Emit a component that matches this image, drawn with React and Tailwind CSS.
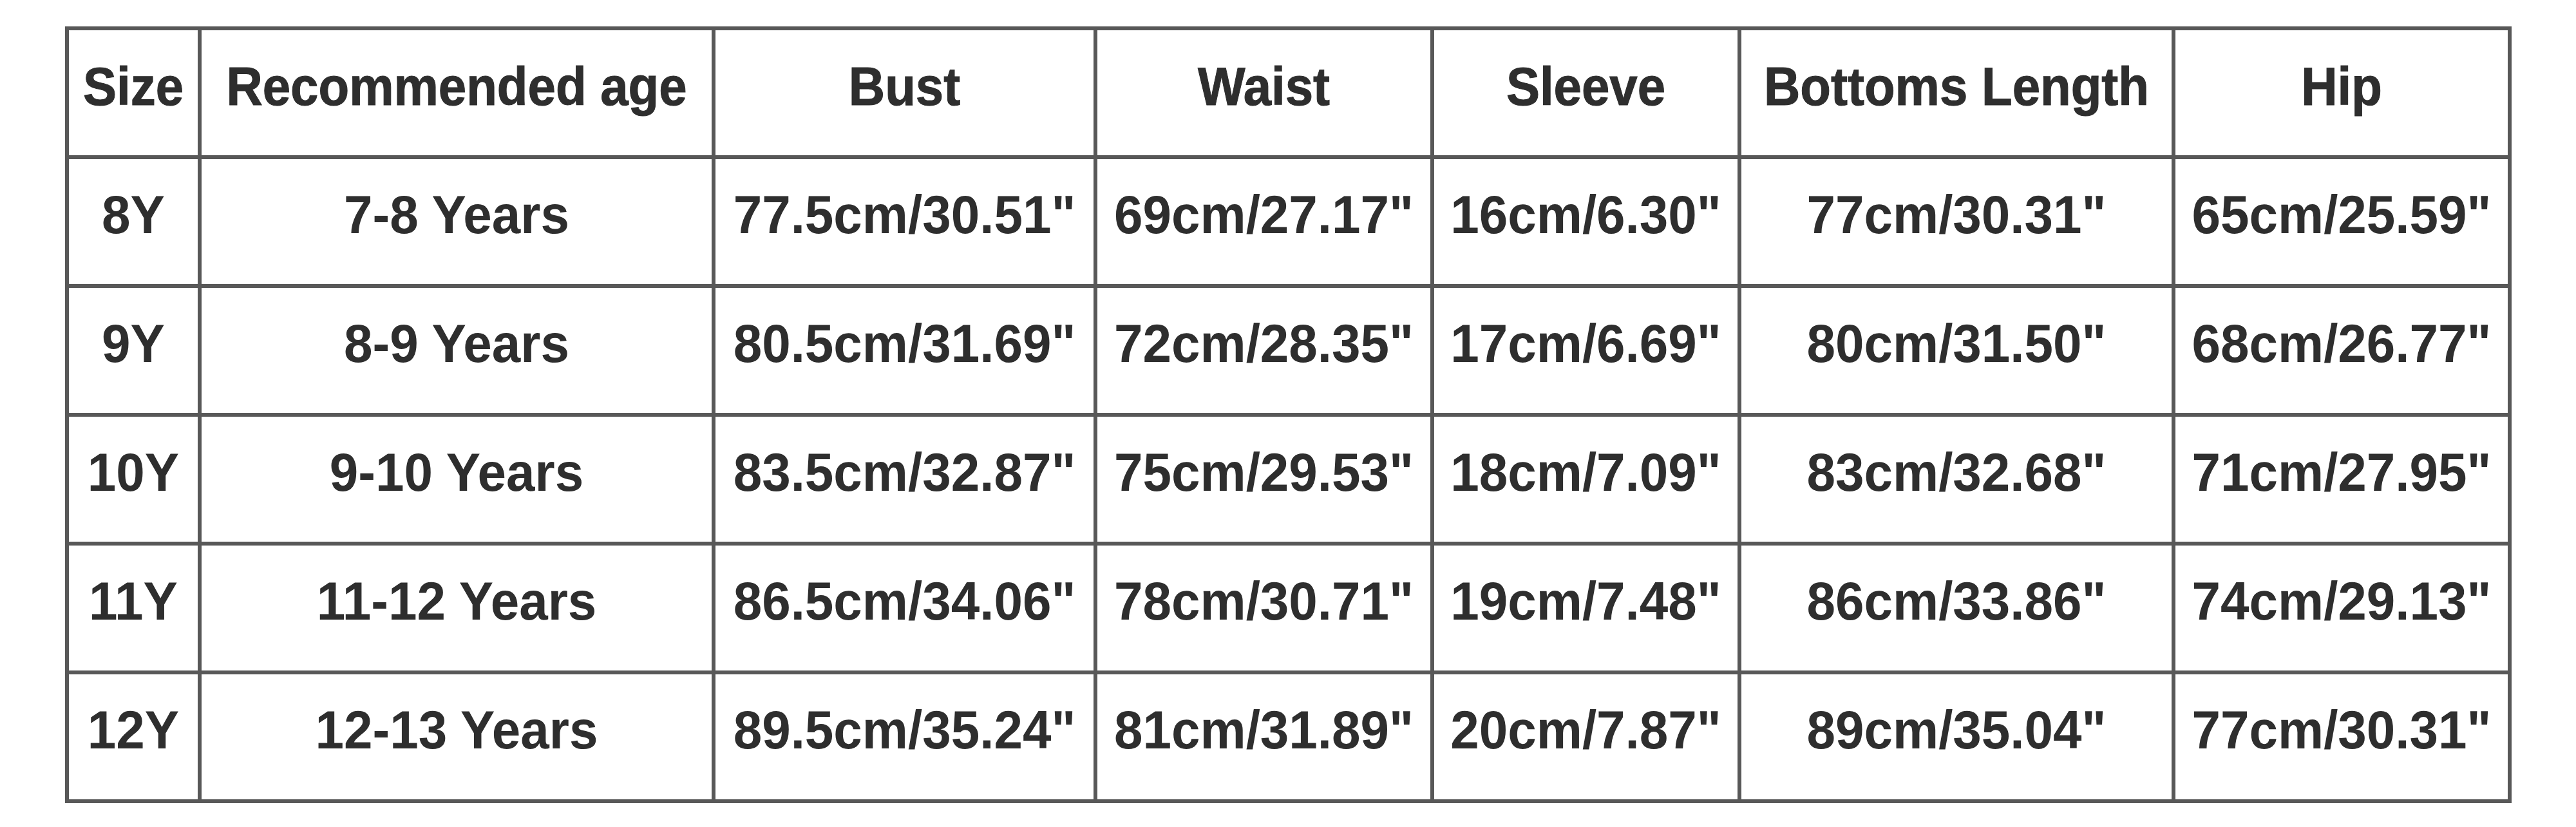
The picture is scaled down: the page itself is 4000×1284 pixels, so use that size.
import React from "react";

const headers = ["Size", "Recommended age", "Bust", "Waist", "Sleeve", "Bottoms Length", "Hip"];

const rows = [
  ["8Y", "7-8 Years", "77.5cm/30.51\"", "69cm/27.17\"", "16cm/6.30\"", "77cm/30.31\"", "65cm/25.59\""],
  ["9Y", "8-9 Years", "80.5cm/31.69\"", "72cm/28.35\"", "17cm/6.69\"", "80cm/31.50\"", "68cm/26.77\""],
  ["10Y", "9-10 Years", "83.5cm/32.87\"", "75cm/29.53\"", "18cm/7.09\"", "83cm/32.68\"", "71cm/27.95\""],
  ["11Y", "11-12 Years", "86.5cm/34.06\"", "78cm/30.71\"", "19cm/7.48\"", "86cm/33.86\"", "74cm/29.13\""],
  ["12Y", "12-13 Years", "89.5cm/35.24\"", "81cm/31.89\"", "20cm/7.87\"", "89cm/35.04\"", "77cm/30.31\""],
];

const Cell = ({ children, head }) => (
  <div className="bg-white flex items-center justify-center pb-5 overflow-hidden">
    {head ? (
      <span className="inline-block whitespace-nowrap font-bold text-[78px] leading-none scale-y-[1.075] text-[#2e2e2e] [-webkit-text-stroke:1px_#2e2e2e]">
        {children}
      </span>
    ) : (
      <span className="inline-block whitespace-nowrap font-bold text-[80px] leading-none scale-y-[1.05] text-[#2e2e2e]">
        {children}
      </span>
    )}
  </div>
);

const App = () => {
  return (
    <div className="w-[4000px] h-[1284px] bg-white font-['Liberation_Sans',Arial,sans-serif] pt-[41px] pl-[101px]">
      {/* Size chart */}
      <div className="w-fit grid grid-cols-[200px_792px_587px_517px_471px_668px_516px] grid-rows-[repeat(6,194px)] gap-[6px] p-[6px] bg-[#585858]">
        {headers.map((h) => (
          <Cell key={h} head>
            {h}
          </Cell>
        ))}
        {rows.map((r) =>
          r.map((v, i) => <Cell key={r[0] + i}>{v}</Cell>)
        )}
      </div>
    </div>
  );
};

export default App;
